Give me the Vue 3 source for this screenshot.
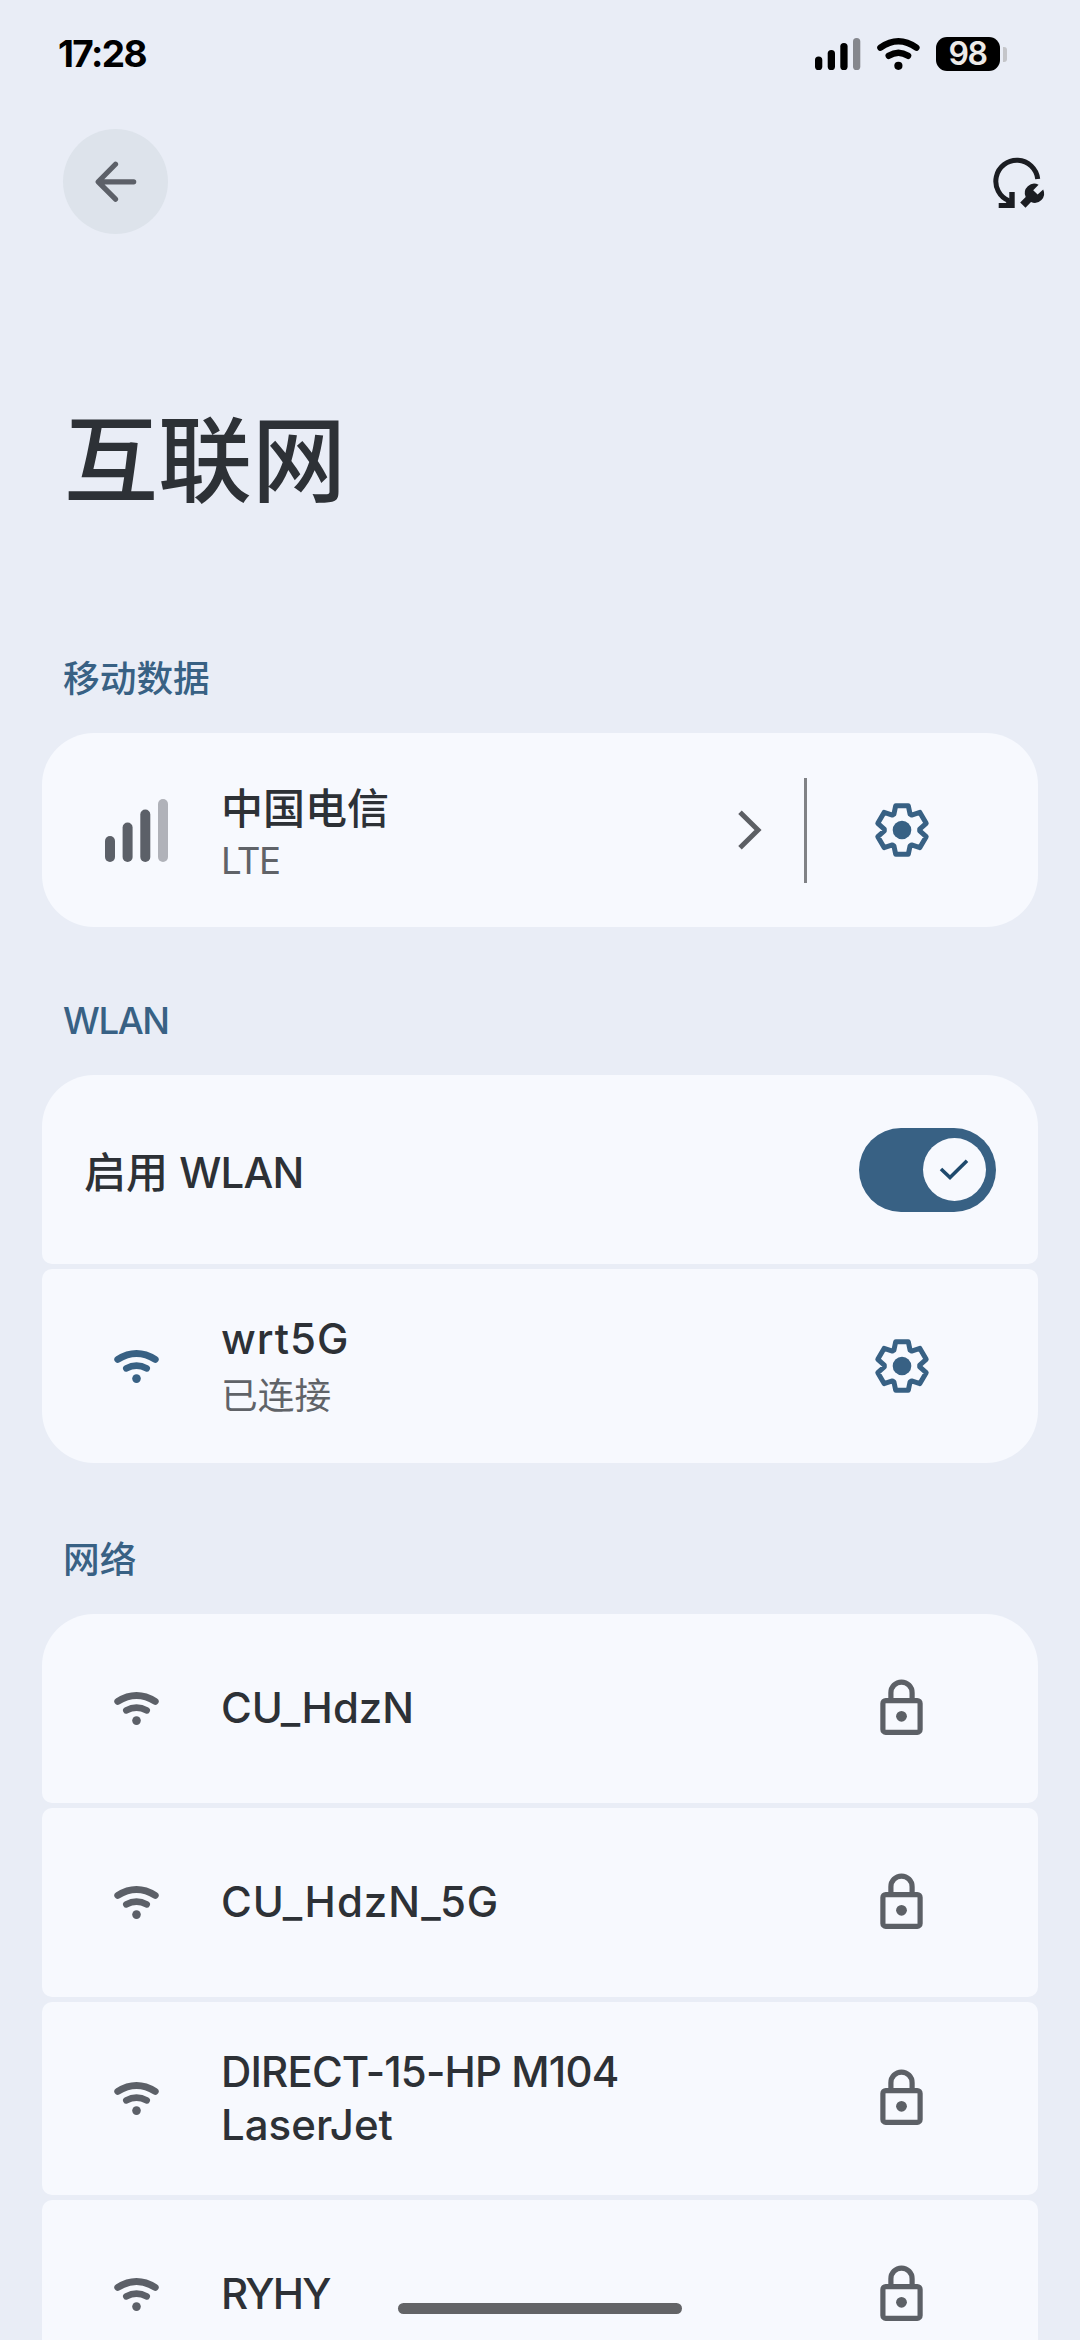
<script setup>
const networks = [
  { name: ['CU_HdzN'], fit: 'normal' },
  { name: ['CU_HdzN_5G'], fit: 'wide' },
  { name: ['DIRECT-15-HP M104', 'LaserJet'], fit: 'narrow' },
  { name: ['RYHY'], fit: 'tight' },
]

// Six-toothed gear outline, one tooth rotated around the centre.
const tooth = [[-8.1, -15.8], [-6.3, -24.3], [6.3, -24.3], [8.1, -15.8]]
const gearPoints = Array.from({ length: 6 }, (_, i) => {
  const a = (i * Math.PI) / 3
  return tooth
    .map(([x, y]) => `${(x * Math.cos(a) - y * Math.sin(a)).toFixed(2)},${(x * Math.sin(a) + y * Math.cos(a)).toFixed(2)}`)
    .join(' ')
}).join(' ')
</script>

<template>
  <div class="screen">
    <header class="status">
      <span class="clock">17:28</span>
      <div class="status-icons">
        <svg class="s-signal" width="46" height="32" viewBox="0 0 46 32">
          <rect x="0" y="18.5" width="7.3" height="13.5" rx="3.6" />
          <rect x="12.7" y="12" width="7.3" height="20" rx="3.6" />
          <rect x="25.3" y="5" width="7.3" height="27" rx="3.6" />
          <rect x="38" y="0" width="7.3" height="32" rx="3.6" fill="#85878d" />
        </svg>
        <svg class="s-wifi" width="43" height="32" viewBox="0 0 43 32">
          <g fill="none" stroke="#000" stroke-width="6.4" stroke-linecap="round">
            <path d="M3.4 9.6Q21.4-3 39.4 9.6" />
            <path d="M11.7 17.8Q21.4 11.7 31.1 17.8" />
          </g>
          <circle cx="21.4" cy="27.8" r="4.1" />
        </svg>
        <span class="battery">98</span>
        <span class="nub"></span>
      </div>
    </header>

    <nav class="toolbar">
      <button class="back" aria-label="返回">
        <svg width="42" height="42" viewBox="0 0 42 42">
          <path d="M20.5 3.2L3.2 20.8L20.5 38.2M4 20.8H38.7" fill="none" stroke="#5c6068" stroke-width="5.2" stroke-linecap="round" stroke-linejoin="round" />
        </svg>
      </button>
      <svg class="repair" width="54" height="54" viewBox="0 0 54 54">
        <path d="M45.7 23A21 21 0 1 0 17 44.8" fill="none" stroke="#1b1d22" stroke-width="5" />
        <path d="M17.3 36H22.7V52H6.7V47H13.6L17.3 43.5Z" fill="#1b1d22" />
        <path d="M46.6 28.7A9.4 9.4 0 0 0 33.7 40.9L28.2 46.4L33.5 51.8L39 46.1A9.4 9.4 0 0 0 51.2 33.5L45.6 38.6L41.2 34.3Z" fill="#1b1d22" />
      </svg>
    </nav>

    <h1>互联网</h1>

    <section>
      <h2 class="h-mobile">移动数据</h2>
      <div class="group">
        <div class="row tall">
          <div class="lead">
            <svg width="63" height="63" viewBox="0 0 63 63" fill="#5c6068">
              <rect x="0" y="37" width="10" height="26" rx="5" />
              <rect x="17.6" y="23.5" width="10" height="39.5" rx="5" />
              <rect x="35.3" y="10.5" width="10" height="52.5" rx="5" />
              <rect x="53" y="0" width="10" height="63" rx="5" fill="#b0b2b9" />
            </svg>
          </div>
          <div class="text carrier">
            <div class="name">中国电信</div>
            <div class="sub lte">LTE</div>
          </div>
          <svg class="chevron" width="24" height="40" viewBox="0 0 24 40">
            <path d="M2 2.2L20 20L2 37.8" fill="none" stroke="#5c5f64" stroke-width="5" />
          </svg>
          <span class="divider"></span>
          <div class="trail">
            <svg width="56" height="56" viewBox="-28 -28 56 56">
              <polygon :points="gearPoints" fill="none" stroke="#386184" stroke-width="5" stroke-linejoin="round" />
              <circle r="9.3" fill="#386184" />
            </svg>
          </div>
        </div>
      </div>
    </section>

    <section>
      <h2 class="h-wlan">WLAN</h2>
      <div class="group">
        <div class="row switch-row">
          <div class="name enable">启用 <span>WLAN</span></div>
          <div class="toggle">
            <div class="knob">
              <svg width="30" height="24" viewBox="0 0 30 24">
                <path d="M2 11L11 19.6L28 2.8" fill="none" stroke="#1f4a6d" stroke-width="3.6" />
              </svg>
            </div>
          </div>
        </div>
        <div class="row tall">
          <div class="lead accent">
            <svg width="45" height="33" viewBox="0 0 45 33">
              <g fill="none" stroke="currentColor" stroke-linecap="round">
                <path d="M3.8 9.4Q22.5-2.3 41.2 9.4" stroke-width="7" />
                <path d="M12.3 18.4Q22.5 12.7 32.7 18.4" stroke-width="6.6" />
              </g>
              <circle cx="22.5" cy="28.6" r="4.3" fill="currentColor" />
            </svg>
          </div>
          <div class="text connected">
            <div class="name wide">wrt5G</div>
            <div class="sub">已连接</div>
          </div>
          <div class="trail">
            <svg width="56" height="56" viewBox="-28 -28 56 56">
              <polygon :points="gearPoints" fill="none" stroke="#386184" stroke-width="5" stroke-linejoin="round" />
              <circle r="9.3" fill="#386184" />
            </svg>
          </div>
        </div>
      </div>
    </section>

    <section>
      <h2 class="h-net">网络</h2>
      <div class="group">
        <div v-for="n in networks" :key="n.fit" class="row">
          <div class="lead">
            <svg width="45" height="33" viewBox="0 0 45 33">
              <g fill="none" stroke="currentColor" stroke-linecap="round">
                <path d="M3.8 9.4Q22.5-2.3 41.2 9.4" stroke-width="7" />
                <path d="M12.3 18.4Q22.5 12.7 32.7 18.4" stroke-width="6.6" />
              </g>
              <circle cx="22.5" cy="28.6" r="4.3" fill="currentColor" />
            </svg>
          </div>
          <div class="text">
            <div class="name">
              <span :class="n.fit">{{ n.name[0] }}</span>
              <template v-if="n.name[1]">{{ ' ' + n.name[1] }}</template>
            </div>
          </div>
          <div class="trail lock">
            <svg width="43" height="56" viewBox="0 0 43 56">
              <g fill="none" stroke="#5c6066" stroke-width="5.2">
                <path d="M10.9 21V13.7a10.6 10.6 0 0 1 21.2 0V21" />
                <rect x="2.9" y="21.6" width="37.2" height="31.7" rx="2.8" />
              </g>
              <circle cx="21.5" cy="37.3" r="5.4" fill="#5c6066" />
            </svg>
          </div>
        </div>
      </div>
    </section>

    <div class="home-bar"></div>
  </div>
</template>

<style>
body {
  margin: 0;
  background: #e9edf6;
}
</style>

<style scoped>
.screen {
  position: relative;
  width: 1080px;
  height: 2340px;
  overflow: hidden;
  background: #e9edf6;
  color: #2d3136;
  font-family: Inter, "Noto Sans CJK SC", sans-serif;
}
svg {
  display: block;
  flex: none;
}
.status {
  box-sizing: border-box;
  display: flex;
  justify-content: space-between;
  align-items: center;
  height: 108px;
  padding: 0 73px 0 58px;
}
.clock {
  font: 700 37px/40px Inter, sans-serif;
  letter-spacing: -1.6px;
  color: #000;
}
.status-icons {
  display: flex;
  align-items: center;
}
.s-wifi {
  margin-left: 16px;
}
.battery {
  width: 64px;
  height: 34px;
  margin-left: 16px;
  border-radius: 11px;
  background: #000;
  color: #eceae8;
  font: 600 32px/34px Inter, sans-serif;
  letter-spacing: -1.5px;
  text-indent: -1px;
  text-align: center;
}
.nub {
  width: 4px;
  height: 15px;
  margin-left: 3px;
  border-radius: 0 3px 3px 0;
  background: #c4c5c9;
}
.toolbar {
  display: flex;
  justify-content: space-between;
  align-items: center;
  height: 147px;
  padding: 0 34px 0 63px;
}
.back {
  display: flex;
  align-items: center;
  justify-content: center;
  width: 105px;
  height: 105px;
  padding: 0;
  border: 0;
  border-radius: 50%;
  background: #dde3eb;
}
.repair {
  margin-top: 3px;
}
h1 {
  height: 140px;
  margin: 129px 0 0 64px;
  font: 500 94px/140px "Noto Sans CJK SC", sans-serif;
}
h2 {
  box-sizing: border-box;
  margin: 0;
  padding-left: 63px;
  color: #386184;
  font-size: 36.7px;
  font-weight: 500;
  line-height: 54px;
}
.h-mobile {
  height: 209px;
  padding-top: 128px;
}
.h-wlan {
  height: 148px;
  padding-top: 67px;
  letter-spacing: -1.4px;
}
.h-net {
  height: 151px;
  padding-top: 70px;
}
.group {
  display: flex;
  flex-direction: column;
  gap: 5px;
  margin: 0 42px;
}
.row {
  display: flex;
  align-items: center;
  flex: none;
  height: 189px;
  border-radius: 10px;
  background: #f7f9fe;
}
.row:first-child {
  border-top-left-radius: 52px;
  border-top-right-radius: 52px;
}
.tall {
  height: 194px;
}
.row.tall:last-child {
  border-bottom-left-radius: 52px;
  border-bottom-right-radius: 52px;
}
.row:nth-child(3) {
  height: 193px;
}
.lead {
  display: flex;
  justify-content: center;
  width: 189px;
  margin-right: -10px;
  color: #5c6068;
}
.accent {
  color: #386184;
}
.text {
  width: 475px;
}
.carrier {
  padding-top: 10px;
}
.name {
  font-size: 42px;
  font-weight: 500;
  line-height: 52.5px;
}
.wide {
  letter-spacing: 1px;
}
.narrow {
  letter-spacing: -0.85px;
}
.tight {
  letter-spacing: -1.8px;
}
.sub {
  color: #606368;
  font-size: 36.7px;
  line-height: 52px;
}
.lte {
  letter-spacing: -1.4px;
}
.connected .sub {
  padding-top: 4px;
}
.connected {
  padding-top: 3px;
}
.chevron {
  margin-left: 42px;
}
.divider {
  width: 3px;
  height: 105px;
  margin-left: 42px;
  background: #808286;
}
.trail {
  display: flex;
  justify-content: center;
  width: 273px;
  margin-left: auto;
}
.lock {
  margin-top: -3px;
}
.row .divider + .trail {
  margin-left: -42px;
}
.switch-row {
  justify-content: space-between;
}
.enable {
  margin-left: 42px;
  padding-top: 7px;
}
.enable span {
  letter-spacing: -0.8px;
}
.toggle {
  box-sizing: border-box;
  display: flex;
  justify-content: flex-end;
  align-items: center;
  width: 137px;
  height: 84px;
  margin-right: 42px;
  padding-right: 10.5px;
  border-radius: 42px;
  background: #386184;
}
.knob {
  display: flex;
  align-items: center;
  justify-content: center;
  width: 63px;
  height: 63px;
  border-radius: 50%;
  background: #f7f9fe;
}
.home-bar {
  position: absolute;
  left: 398px;
  top: 2303px;
  width: 284px;
  height: 11px;
  border-radius: 5.5px;
  background: #636467;
}
</style>
